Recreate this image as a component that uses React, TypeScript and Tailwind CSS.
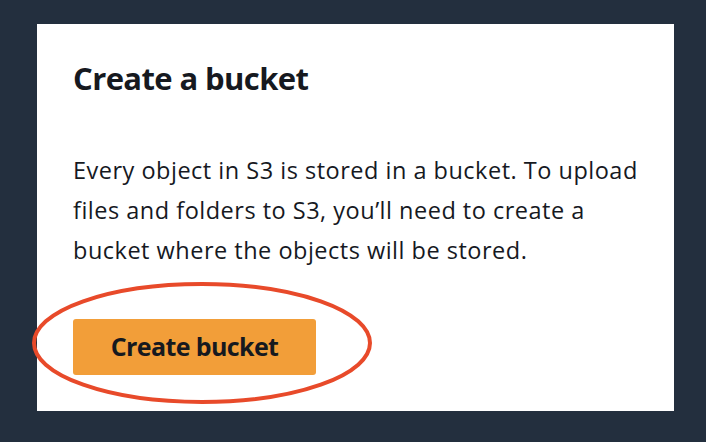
export default function App() {
    return (
        <div
            className="h-[442px] w-full bg-[#232f3e] pt-6 pl-[37px]"
            style={{ fontFamily: '"Open Sans", "Noto Sans", sans-serif' }}
        >
            <div className="h-[387px] w-[637px] bg-white px-9 pt-[34px] text-[#16191f]">
                <h1 className="text-[31px] leading-[40px] font-bold tracking-[-0.6px]">Create a bucket</h1>

                <p className="mt-[52px] text-[23.5px] leading-[40px] tracking-[0.5px] whitespace-nowrap">
                    Every object in S3 is stored in a bucket. To upload
                    <br />
                    files and folders to S3, you’ll need to create a
                    <br />
                    bucket where the objects will be stored.
                </p>

                {/* Button with hand-drawn highlight */}
                <div className="relative mt-[49px] w-[243px]">
                    <button className="h-14 w-[243px] rounded-[3px] bg-[#f29e39] text-[25px] font-bold tracking-[-0.6px] text-[#16191f]">
                        Create bucket
                    </button>
                    <svg
                        className="pointer-events-none absolute -left-[41px] -top-[37px]"
                        width="340"
                        height="122"
                        viewBox="0 0 340 122"
                    >
                        <ellipse cx="170" cy="61" rx="168" ry="59" fill="none" stroke="#e84a2a" strokeWidth="4" />
                    </svg>
                </div>
            </div>
        </div>
    );
}
